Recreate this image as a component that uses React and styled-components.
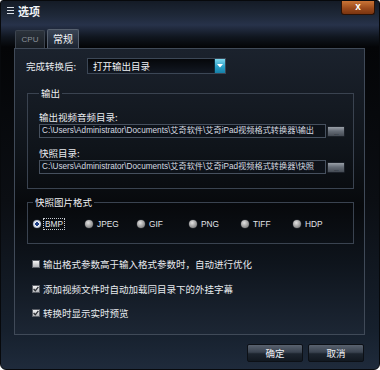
import React from 'react';
import styled, { createGlobalStyle } from 'styled-components';

const GlobalStyle = createGlobalStyle`
  html, body {
    margin: 0;
    padding: 0;
    background: #ffffff;
  }
  body {
    font-family: "Noto Sans CJK SC", "Liberation Sans", sans-serif;
  }
`

const Window = styled.div`
  width: 380px;
  height: 370px;
  box-sizing: border-box;
  display: flex;
  flex-direction: column;
  border-radius: 3px 3px 6px 6px;
  border: 1px solid #07090c;
  overflow: hidden;
  background: linear-gradient(to bottom,
    #141b26 0px, #1e2838 14px, #27324a 24px, #10161f 36px, #040507 46px,
    #0b0e13 200px, #16202d 330px, #1f2b3c 370px);
  color: #e6e9ee;
`

const TitleBar = styled.div`
  height: 26px;
  flex: none;
  display: flex;
  align-items: flex-start;
  padding-left: 6px;
`

const MenuIcon = styled.span`
  width: 7px;
  margin-top: 6px;
  display: flex;
  flex-direction: column;
  gap: 2px;
  & > i {
    display: block;
    height: 1px;
    background: #d8dde4;
  }
`

const Title = styled.span`
  margin-left: 4px;
  margin-top: 2px;
  font-size: 11px;
  line-height: 16px;
  font-weight: bold;
  color: #f2f4f8;
`

const CloseButton = styled.div`
  margin-left: auto;
  margin-right: 4px;
  margin-top: -1px;
  width: 32px;
  height: 14px;
  display: flex;
  align-items: center;
  justify-content: center;
  border: 1px solid #2a1206;
  border-top: none;
  border-radius: 0 0 3px 3px;
  background: linear-gradient(to bottom, #d07a3a, #9a4a1c 60%, #7a3410);
  color: #fff;
  font-family: "Liberation Sans", sans-serif;
  font-size: 10px;
  font-weight: bold;
  line-height: 10px;
`

const TabRow = styled.div`
  height: 21px;
  flex: none;
  display: flex;
  align-items: flex-end;
  padding-left: 14px;
  gap: 2px;
`

const Tab = styled.div`
  width: ${p => (p.$active ? 32 : 30)}px;
  height: ${p => (p.$active ? 19 : 18)}px;
  box-sizing: border-box;
  display: flex;
  align-items: center;
  justify-content: center;
  border: 1px solid ${p => (p.$active ? '#56606e' : '#3c444f')};
  border-bottom: none;
  border-radius: 2px 2px 0 0;
  background: ${p => (p.$active
    ? 'linear-gradient(to bottom, #3a4556, #1b2330)'
    : 'linear-gradient(to bottom, #2c333c, #181d23)')};
  color: ${p => (p.$active ? '#f4f6f9' : '#8a919a')};
  font-size: ${p => (p.$active ? '10px' : '8px')};
  font-family: ${p => (p.$active ? '"Noto Sans CJK SC", sans-serif' : '"Liberation Sans", sans-serif')};
  line-height: 12px;
`

const Panel = styled.div`
  margin-left: 13px;
  width: 351px;
  height: 287px;
  box-sizing: border-box;
  flex: none;
  border: 1px solid #404a58;
  background: linear-gradient(to bottom, #1b222d 0%, #0f141a 35%, #07090c 55%, #0e141c 75%, #1c2634 100%);
  padding: 9px 0 0 0;
  font-size: 9.5px;
  line-height: 12px;
`

const Row = styled.div`
  display: flex;
  align-items: center;
  padding-left: ${p => p.$indent || 0}px;
  margin-top: ${p => p.$top || 0}px;
`

const Label = styled.span`
  display: block;
  font-size: 9.5px;
  line-height: 12px;
  color: #e8ebef;
  white-space: nowrap;
  width: ${p => (p.$width ? `${p.$width}px` : 'auto')};
  margin-top: ${p => p.$top || 0}px;
`

const Select = styled.div`
  width: 139px;
  height: 16px;
  box-sizing: border-box;
  display: flex;
  align-items: center;
  border: 1px solid #3c4756;
  background: linear-gradient(to bottom, #05070a, #121822);
  padding-left: 5px;
  font-size: 9.5px;
  line-height: 12px;
  color: #f0f2f5;
`

const SelectArrow = styled.span`
  margin-left: auto;
  width: 10px;
  height: 14px;
  display: flex;
  align-items: center;
  justify-content: center;
  background: linear-gradient(to bottom, #7fd8ee, #2aa0c8 55%, #1580a8);
  border-left: 1px solid #0c3040;
`

const Group = styled.fieldset`
  margin: ${p => p.$top}px 0 0 12px;
  width: 327px;
  box-sizing: border-box;
  min-width: 0;
  border: 1px solid #3a4350;
  padding: ${p => p.$pad};
  font-size: 9.5px;
  line-height: 12px;
`

const Legend = styled.legend`
  padding: 0 2px;
  margin-left: 0;
  font-size: 9.5px;
  line-height: 12px;
  color: #eef0f3;
`

const PathRow = styled.div`
  display: flex;
  align-items: center;
  gap: 1px;
  margin-top: 1px;
`

const PathInput = styled.div`
  width: 287px;
  height: 14px;
  box-sizing: border-box;
  border: 1px solid #46505e;
  background: #0d1219;
  padding-left: 2px;
  overflow: hidden;
  white-space: nowrap;
  font-family: "Liberation Sans", "Noto Sans CJK SC", sans-serif;
  font-size: 8.2px;
  line-height: 12px;
  color: #d6dae0;
`

const BrowseButton = styled.div`
  width: 18px;
  height: 11px;
  box-sizing: border-box;
  border: 1px solid #1c2129;
  border-radius: 1px;
  background: linear-gradient(to bottom, #9aa0a8, #666d77 45%, #454b54);
  display: flex;
  align-items: flex-end;
  justify-content: center;
  color: #1c2430;
  font-family: "Liberation Sans", sans-serif;
  font-size: 6px;
  line-height: 6px;
  letter-spacing: -0.5px;
`

const RadioRow = styled.div`
  display: grid;
  grid-template-columns: repeat(6, 52px);
`

const RadioItem = styled.div`
  display: flex;
  align-items: center;
  height: 12px;
`

const RadioDot = styled.span`
  width: 8px;
  height: 8px;
  flex: none;
  border-radius: 50%;
  background: ${p => (p.$checked
    ? 'radial-gradient(circle, #1d3e86 0 1.6px, #f2f6fc 2.1px, #a9b4c6 4px)'
    : 'radial-gradient(circle at 40% 35%, #e2e2e2, #8a8a8a 70%, #5a5a5a)')};
  box-shadow: 0 0 0 0.5px #2a2f36;
`

const RadioText = styled.span`
  margin-left: ${p => (p.$focused ? 2 : 4)}px;
  padding: 0 ${p => (p.$focused ? 1 : 0)}px;
  border: ${p => (p.$focused ? '1px dotted #c8ccd2' : 'none')};
  font-family: "Liberation Sans", sans-serif;
  font-size: 8.3px;
  line-height: 10px;
  color: #e2e5ea;
`

const CheckRow = styled.div`
  display: flex;
  align-items: center;
  height: 12px;
  padding-left: 17px;
  margin-top: ${p => p.$top}px;
`

const CheckBox = styled.span`
  width: 8px;
  height: 8px;
  box-sizing: border-box;
  flex: none;
  display: flex;
  align-items: center;
  justify-content: center;
  border: 1px solid #5c6068;
  background: linear-gradient(to bottom, #f4f4f4, #b4b6ba);
  margin-right: 3px;
`

const Footer = styled.div`
  display: flex;
  justify-content: flex-end;
  gap: 5px;
  padding: 9px 15px 0 0;
`

const Button = styled.div`
  width: 56px;
  height: 18px;
  box-sizing: border-box;
  display: flex;
  align-items: center;
  justify-content: center;
  border: 1px solid #0c1016;
  border-radius: 2px;
  background: linear-gradient(to bottom, #59626f, #3a4350 45%, #1d252f 55%, #111820);
  font-size: 9.5px;
  line-height: 12px;
  color: #f0f2f5;
`

const formats = ['BMP', 'JPEG', 'GIF', 'PNG', 'TIFF', 'HDP'];

const options = [
  { text: '输出格式参数高于输入格式参数时，自动进行优化', checked: false, top: 14 },
  { text: '添加视频文件时自动加载同目录下的外挂字幕', checked: true, top: 13 },
  { text: '转换时显示实时预览', checked: true, top: 12 },
];

const Check = () => (
  <svg width="6" height="6" viewBox="0 0 6 6">
    <path d="M0.6 3 L2.3 4.8 L5.4 0.8" fill="none" stroke="#2a2d33" strokeWidth="1.3" />
  </svg>
);

const App = () => {
  return (
    <>
      <GlobalStyle />
      <Window>
        <TitleBar>
          <MenuIcon><i /><i /><i /></MenuIcon>
          <Title>选项</Title>
          <CloseButton>x</CloseButton>
        </TitleBar>

        <TabRow>
          <Tab>CPU</Tab>
          <Tab $active>常规</Tab>
        </TabRow>

        <Panel>
          <Row $indent={11}>
            <Label $width={61}>完成转换后:</Label>
            <Select>
              打开输出目录
              <SelectArrow>
                <svg width="6" height="4" viewBox="0 0 6 4">
                  <path d="M0 0 L6 0 L3 3.5 Z" fill="#ffffff" />
                </svg>
              </SelectArrow>
            </Select>
          </Row>

          <Group $top={13} $pad="12px 0 14px 11px">
            <Legend>输出</Legend>
            <Label>输出视频音频目录:</Label>
            <PathRow>
              <PathInput>C:\Users\Administrator\Documents\艾奇软件\艾奇iPad视频格式转换器\输出</PathInput>
              <BrowseButton>....</BrowseButton>
            </PathRow>
            <Label $top={9}>快照目录:</Label>
            <PathRow>
              <PathInput>C:\Users\Administrator\Documents\艾奇软件\艾奇iPad视频格式转换器\快照</PathInput>
              <BrowseButton>....</BrowseButton>
            </PathRow>
          </Group>

          <Group $top={7} $pad="10px 0 13px 5px">
            <Legend>快照图片格式</Legend>
            <RadioRow>
              {formats.map((f, i) => (
                <RadioItem key={f}>
                  <RadioDot $checked={i === 0} />
                  <RadioText $focused={i === 0}>{f}</RadioText>
                </RadioItem>
              ))}
            </RadioRow>
          </Group>

          {options.map(o => (
            <CheckRow key={o.text} $top={o.top}>
              <CheckBox>{o.checked && <Check />}</CheckBox>
              <Label>{o.text}</Label>
            </CheckRow>
          ))}
        </Panel>

        <Footer>
          <Button>确定</Button>
          <Button>取消</Button>
        </Footer>
      </Window>
    </>
  );
};

export default App;
